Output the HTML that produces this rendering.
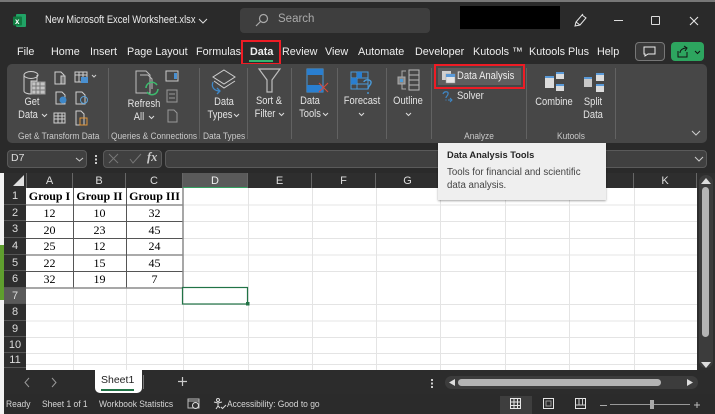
<!DOCTYPE html>
<html><head><meta charset="utf-8"><style>
html,body{margin:0;padding:0}
body{width:715px;height:414px;overflow:hidden;position:relative;background:#fff;font-family:"Liberation Sans",sans-serif}
.a{position:absolute}
.t{position:absolute;white-space:nowrap;color:#e4e4e4;font-size:11px;line-height:13px}
.c{transform:translateX(-50%) scaleX(.85);text-align:center}
.n{transform:scaleX(.86);transform-origin:left center}
.m{font-size:10.8px;color:#eee;top:46px}
.g{font-size:9px;color:#cacaca;top:130px;transform:scaleX(.93);transform-origin:left center}
.g.c{transform:translateX(-50%) scaleX(.93);transform-origin:center}
.s{font-size:9px;color:#d6d6d6;top:398px;transform:scaleX(.94);transform-origin:left center}
.sep{position:absolute;top:68px;width:1px;height:71px;background:#626262}
.h{position:absolute;top:173px;height:15px;background:#2e2e2e;color:#ddd;font-size:11px;line-height:16px;text-align:center;box-sizing:border-box;border-right:1px solid #666}
.r{position:absolute;left:4px;width:22px;background:#2e2e2e;color:#ddd;font-size:11px;text-align:center;box-sizing:border-box;border-bottom:1px solid #555}
.d{position:absolute;font-family:"Liberation Serif",serif;color:#000;font-size:12px;line-height:16.6px;text-align:center;height:16.6px}
.b{font-weight:bold}
svg{position:absolute;overflow:visible}
</style></head><body>
<div class="a" style="left:0;top:0;width:715px;height:173px;background:#2a2a2a"></div>
<div class="a" style="left:0;top:0;width:715px;height:2px;background:#777"></div>

<!-- title bar -->
<svg style="left:13px;top:14px" width="14" height="14"><rect x="3" y="0" width="10" height="13" rx="1" fill="#21a366"/><rect x="0" y="2.500" width="9" height="9" rx="1" fill="#107c41"/><text x="2" y="10" font-size="8" font-weight="bold" fill="#fff" font-family="Liberation Sans">x</text></svg>
<div class="t n" style="left:45px;top:14px;color:#ececec;transform:scaleX(.85)">New Microsoft Excel Worksheet.xlsx</div>
<svg style="left:198px;top:18px" width="10" height="6"><path d="M1 1l4 4 4-4" fill="none" stroke="#ddd" stroke-width="1"/></svg>
<div class="a" style="left:240px;top:8px;width:190px;height:25px;background:#3e3e3e;border-radius:4px"></div>
<svg style="left:255px;top:13px" width="14" height="14"><circle cx="8.500" cy="5.500" r="4" fill="none" stroke="#aaa" stroke-width="1.200"/><path d="M5.500 8.500L1 13" stroke="#aaa" stroke-width="1.200"/></svg>
<div class="t" style="left:278px;top:13px;font-size:11.500px;color:#aaa">Search</div>
<div class="a" style="left:460px;top:6px;width:100px;height:23px;background:#000"></div>
<svg style="left:573px;top:13px" width="15" height="15"><path d="M2 13l1-4 6-7 4 3-6 7zM3 9l4 3M9 2l1-1" fill="none" stroke="#e8e8e8" stroke-width="1"/></svg>
<div class="a" style="left:614px;top:20px;width:9px;height:1px;background:#ddd"></div>
<div class="a" style="left:651px;top:16px;width:7px;height:7px;border:1.200px solid #ddd;border-radius:1px"></div>
<svg style="left:689px;top:16px" width="10" height="10"><path d="M1 1l8 8M9 1l-8 8" stroke="#e4e4e4" stroke-width="1.100"/></svg>

<!-- menu -->
<div class="t m" style="left:17px">File</div>
<div class="t m" style="left:51px">Home</div>
<div class="t m" style="left:90px">Insert</div>
<div class="t m" style="left:127px">Page Layout</div>
<div class="t m" style="left:196px">Formulas</div>
<div class="t m" style="left:250px;font-weight:bold">Data</div>
<div class="a" style="left:249px;top:60px;width:24px;height:2px;background:#33b56f"></div>
<div class="a" style="left:241px;top:40px;width:40px;height:25px;border:2.500px solid #ee1c25;box-sizing:border-box"></div>
<div class="t m" style="left:282px">Review</div>
<div class="t m" style="left:325px">View</div>
<div class="t m" style="left:358px">Automate</div>
<div class="t m" style="left:415px">Developer</div>
<div class="t m" style="left:473px">Kutools ™</div>
<div class="t m" style="left:529px">Kutools Plus</div>
<div class="t m" style="left:597px">Help</div>
<div class="a" style="left:635px;top:42px;width:30px;height:19px;border:1px solid #777;border-radius:4px;box-sizing:border-box;background:#3a3a3a"></div>
<svg style="left:643px;top:46px" width="14" height="11"><path d="M1 1h11v7H5L2 10V8H1z" fill="none" stroke="#eee" stroke-width="1"/></svg>
<div class="a" style="left:671px;top:42px;width:33px;height:19px;background:#2da55f;border-radius:4px"></div>
<svg style="left:677px;top:46px" width="24" height="12"><path d="M1 5v6h9V6M3 7c0-3 3-5 6-5M7 0l3 2-2 3" fill="none" stroke="#111" stroke-width="1"/><path d="M18 5l2.500 2.500L23 5" fill="none" stroke="#111" stroke-width="1"/></svg>

<!-- ribbon -->
<div class="a" style="left:7px;top:64px;width:700px;height:79px;background:#474747;border-radius:5px"></div>
<div class="sep" style="left:108px"></div><div class="sep" style="left:199px"></div><div class="sep" style="left:247px"></div><div class="sep" style="left:291px"></div><div class="sep" style="left:337px"></div><div class="sep" style="left:386px"></div><div class="sep" style="left:431px"></div><div class="sep" style="left:526px"></div><div class="sep" style="left:615px"></div>

<svg style="left:22px;top:70px" width="24" height="26"><path d="M2 5v16c0 2 4 3 7 3V11h6V5" fill="none" stroke="#cfcfcf"/><ellipse cx="9" cy="5" rx="7" ry="3.500" fill="none" stroke="#cfcfcf"/><rect x="10" y="12" width="13" height="12" fill="#c4c4c4" stroke="#999"/><path d="M10 16h13M10 20h13M14 12v12M18 12v12" stroke="#777"/></svg>
<div class="t c" style="left:32px;top:96px">Get</div>
<div class="t c" style="left:28px;top:109px">Data</div>
<svg style="left:41px;top:113px" width="7" height="5"><path d="M1 1l2.500 2.500L6 1" fill="none" stroke="#ddd"/></svg>
<svg style="left:54px;top:71px" width="46" height="54" fill="none" stroke="#cfcfcf" stroke-width="1">
<path d="M1 1h6l3 3v9H1z"/><path d="M7 5h4v8H7z" fill="#777"/>
<rect x="21" y="1" width="12" height="10"/><path d="M21 4h12M25 1v10M29 1v10"/><rect x="27" y="6" width="7" height="6" fill="#4a90d0" stroke="none"/>
<path d="M38 4l2 2 2-2"/>
<path d="M2 21h6l3 3v9H2z"/><circle cx="9" cy="29" r="3.500" fill="#3f88c8" stroke="none"/>
<path d="M22 21h6l3 3v9h-9z"/><circle cx="30" cy="29" r="3.500" stroke="#5ba0d8"/>
<rect x="0" y="42" width="11" height="10"/><path d="M0 45h11M0 48h11M4 42v10M8 42v10"/>
<path d="M22 40h5l3 3v11h-8z"/><rect x="26" y="47" width="7" height="7" fill="none" stroke="#e0953a"/>
</svg>
<div class="t g" style="left:18px">Get &amp; Transform Data</div>
<div class="t g" style="left:111px">Queries &amp; Connections</div>
<div class="t g" style="left:203px">Data Types</div>

<svg style="left:135px;top:70px" width="24" height="26" fill="none"><path d="M1 1h10l4 4v18H1z" stroke="#bdbdbd"/><path d="M5 5h8l4 4v10" stroke="#bdbdbd"/><path d="M11 18a6 6 0 0 1 11-3M23 19a6 6 0 0 1-11 3" stroke="#3dbb6e" stroke-width="1.600"/></svg>
<div class="t c" style="left:144px;top:98px">Refresh</div>
<div class="t c" style="left:139px;top:111px">All</div>
<svg style="left:148px;top:115px" width="7" height="5"><path d="M1 1l2.500 2.500L6 1" fill="none" stroke="#ddd"/></svg>
<svg style="left:165px;top:70px" width="15" height="54" fill="none" stroke="#c8c8c8"><rect x="1" y="1" width="12" height="10"/><rect x="9" y="3" width="3" height="6" fill="#4a90d0" stroke="none"/><rect x="2" y="20" width="10" height="12" stroke="#999"/><path d="M4 24h6M4 28h6" stroke="#999"/><path d="M3 40h6l3 3v9H3z" stroke="#999"/></svg>

<svg style="left:211px;top:69px" width="27" height="28" fill="none"><path d="M13 1l11 7-11 7L2 8z" stroke="#cfcfcf"/><path d="M3 12l10 7 11-7" stroke="#cfcfcf"/><path d="M2 13c-2 5 1 9 7 9M6 19l3 3-3 3" stroke="#3f88c8" stroke-width="1.300"/></svg>
<div class="t c" style="left:224px;top:96px">Data</div>
<div class="t c" style="left:220px;top:109px">Types</div>
<svg style="left:233px;top:113px" width="7" height="5"><path d="M1 1l2.500 2.500L6 1" fill="none" stroke="#ddd"/></svg>

<svg style="left:258px;top:68px" width="24" height="25" fill="none"><path d="M1 1h21l-8 11v12H9V12z" stroke="#bdbdbd" stroke-width="1.200"/></svg>
<div class="t c" style="left:269px;top:95px">Sort &amp;</div>
<div class="t c" style="left:265px;top:108px">Filter</div>
<svg style="left:278px;top:112px" width="7" height="5"><path d="M1 1l2.500 2.500L6 1" fill="none" stroke="#ddd"/></svg>

<svg style="left:306px;top:69px" width="24" height="25" fill="none"><rect x="1" y="0" width="16" height="23" stroke="#4a9ad8"/><rect x="1" y="0" width="16" height="6" fill="#2a7fd0"/><rect x="1" y="16" width="16" height="7" fill="#2a7fd0"/><path d="M13 14l9 9M22 14l-9 9" stroke="#d84a3a" stroke-width="1.100"/></svg>
<div class="t c" style="left:310px;top:95px">Data</div>
<div class="t c" style="left:310px;top:108px">Tools</div>
<svg style="left:322px;top:112px" width="7" height="5"><path d="M1 1l2.500 2.500L6 1" fill="none" stroke="#ddd"/></svg>

<svg style="left:350px;top:71px" width="25" height="24" fill="none"><rect x="1" y="1" width="17" height="17" stroke="#4a9ad8"/><path d="M1 7h17M1 13h17M7 1v17" stroke="#4a9ad8"/><rect x="1" y="7" width="6" height="6" fill="#2a7fd0"/><rect x="7" y="1" width="5" height="6" fill="#2a7fd0"/><path d="M14 11c0-3 8-3 7 1 0 2-3 3-3 6M18 21v2" stroke="#4a9ad8" stroke-width="1.400"/></svg>
<div class="t c" style="left:362px;top:95px">Forecast</div>
<svg style="left:358px;top:112px" width="7" height="5"><path d="M1 1l2.500 2.500L6 1" fill="none" stroke="#ddd"/></svg>

<svg style="left:398px;top:69px" width="22" height="22" fill="none"><rect x="11" y="1" width="10" height="20" stroke="#b8b8b8"/><path d="M11 6h10M11 11h10M11 16h10" stroke="#b8b8b8"/><path d="M8 2H4v6M8 20H4v-6" stroke="#aaa"/><rect x="0" y="8" width="7" height="7" fill="#888" stroke="#aaa"/><rect x="2" y="10" width="3" height="3" fill="#4a9ad8"/></svg>
<div class="t c" style="left:408px;top:95px">Outline</div>
<svg style="left:405px;top:112px" width="7" height="5"><path d="M1 1l2.500 2.500L6 1" fill="none" stroke="#ddd"/></svg>

<div class="a" style="left:434px;top:64px;width:91px;height:25px;border:2.500px solid #ee1c25;box-sizing:border-box;background:#474747"></div>
<div class="a" style="left:438px;top:68px;width:83px;height:17px;background:#5e5e5e"></div>
<svg style="left:442px;top:71px" width="14" height="12"><rect x="0" y="0" width="9" height="9" fill="#d0d0d0"/><rect x="4" y="3" width="9" height="9" fill="#e4e4e4" stroke="#999" stroke-width=".5"/><rect x="4" y="3" width="9" height="3" fill="#5a9ad8"/></svg>
<div class="t n" style="left:457px;top:70px;color:#eee">Data Analysis</div>
<svg style="left:442px;top:91px" width="12" height="12" fill="none"><path d="M1 3c1-3 6-3 5 0 0 2-2 2-2 4" stroke="#3f88c8" stroke-width="1.200"/><path d="M4 8.500v1M6 9h4M8 7l2 2-2 2" stroke="#3f88c8"/></svg>
<div class="t n" style="left:457px;top:90px">Solver</div>
<div class="t g c" style="left:479px">Analyze</div>

<svg style="left:545px;top:71px" width="20" height="21"><rect x="0" y="5" width="9" height="12" fill="#dcdcdc"/><rect x="11" y="1" width="8" height="7" fill="#dcdcdc"/><rect x="11" y="13" width="8" height="7" fill="#dcdcdc"/><rect x="11" y="1" width="8" height="2" fill="#5a9ad8"/><rect x="11" y="13" width="8" height="2" fill="#5a9ad8"/><rect x="0" y="5" width="9" height="2" fill="#5a9ad8"/></svg>
<div class="t c" style="left:554px;top:96px">Combine</div>
<svg style="left:584px;top:73px" width="20" height="19"><rect x="0" y="4" width="8" height="10" fill="#c8c8c8"/><rect x="12" y="0" width="8" height="8" fill="#dcdcdc"/><rect x="12" y="11" width="8" height="8" fill="#dcdcdc"/><rect x="12" y="0" width="8" height="2" fill="#5a9ad8"/><rect x="12" y="11" width="8" height="2" fill="#5a9ad8"/><rect x="0" y="4" width="8" height="2" fill="#5a9ad8"/></svg>
<div class="t c" style="left:593px;top:96px">Split</div>
<div class="t c" style="left:593px;top:109px">Data</div>
<div class="t g c" style="left:571px">Kutools</div>
<svg style="left:691px;top:130px" width="10" height="6"><path d="M1 1l4 4 4-4" fill="none" stroke="#ccc"/></svg>

<!-- formula bar -->
<div class="a" style="left:0;top:143px;width:715px;height:30px;background:#2a2a2a"></div>
<div class="a" style="left:7px;top:150px;width:80px;height:18px;background:#404040;border:1px solid #5a5a5a;border-radius:4px;box-sizing:border-box"></div>
<div class="t" style="left:11px;top:152px;font-size:10.500px;color:#ddd">D7</div>
<svg style="left:75px;top:157px" width="9" height="5"><path d="M1 1l3.500 3L8 1" fill="none" stroke="#ccc"/></svg>
<div class="a" style="left:95px;top:155px;width:2px;height:2px;background:#ccc;box-shadow:0 3.500px 0 #ccc,0 7px 0 #ccc"></div>
<div class="a" style="left:103px;top:150px;width:59px;height:18px;background:#404040;border:1px solid #5a5a5a;border-radius:4px;box-sizing:border-box"></div>
<svg style="left:108px;top:153px" width="34" height="12" fill="none"><path d="M1 1l9 9M10 1l-9 9" stroke="#777"/><path d="M22 6l3 4 8-9" stroke="#777"/></svg>
<div class="t" style="left:147px;top:151px;font-family:'Liberation Serif',serif;font-style:italic;font-size:12.500px;font-weight:bold;color:#ccc">fx</div>
<div class="a" style="left:165px;top:150px;width:542px;height:18px;background:#404040;border:1px solid #5a5a5a;border-radius:4px;box-sizing:border-box"></div>
<svg style="left:694px;top:156px" width="10" height="6"><path d="M1 1l4 4 4-4" fill="none" stroke="#ccc"/></svg>

<!-- sheet -->
<div class="a" style="left:0;top:173px;width:4px;height:72px;background:#f3f3f3"></div>
<div class="a" style="left:0;top:245px;width:4px;height:55px;background:#5f9e2e"></div>
<div class="a" style="left:4px;top:173px;width:693px;height:15px;background:#2e2e2e"></div>
<svg style="left:13px;top:175px" width="12" height="12"><path d="M11 0v11H0z" fill="#e0e0e0"/></svg>
<div class="h" style="left:26px;width:47px;border-left:1px solid #666">A</div>
<div class="h" style="left:73px;width:53px">B</div>
<div class="h" style="left:126px;width:57px">C</div>
<div class="h" style="left:183px;width:65px;background:#5a5a5a;color:#eee;border-bottom:1px solid #33a060">D</div>
<div class="h" style="left:248px;width:64px">E</div>
<div class="h" style="left:312px;width:64px">F</div>
<div class="h" style="left:376px;width:64px">G</div>
<div class="h" style="left:440px;width:65px">H</div>
<div class="h" style="left:505px;width:64px">I</div>
<div class="h" style="left:569px;width:65px">J</div>
<div class="h" style="left:634px;width:63px">K</div>

<div class="r" style="top:188px;height:17px;line-height:17px">1</div>
<div class="r" style="top:205px;height:16px;line-height:16px">2</div>
<div class="r" style="top:221px;height:17px;line-height:17px">3</div>
<div class="r" style="top:238px;height:17px;line-height:17px">4</div>
<div class="r" style="top:255px;height:16px;line-height:16px">5</div>
<div class="r" style="top:271px;height:17px;line-height:17px">6</div>
<div class="r" style="top:288px;height:16px;line-height:16px;background:#5a5a5a">7</div>
<div class="r" style="top:304px;height:17px;line-height:17px">8</div>
<div class="r" style="top:321px;height:16px;line-height:16px">9</div>
<div class="r" style="top:337px;height:16px;line-height:16px">10</div>
<div class="r" style="top:353px;height:15px;line-height:15px">11</div>
<div class="r" style="top:368px;height:2px;border:0"></div>

<svg style="left:0;top:0" width="715" height="414" fill="none">
<g stroke="#e4e4e4" stroke-width="1">
<path d="M183 205h514M183 221.500h514M183 238.500h514M183 255h514M183 271.500h514M26 304.500h671M26 321h671M26 337.500h671M26 353.500h671M26 364.500h671"/>
<path d="M73.500 288v82M126.500 288v82M183.500 288v82M248.500 188v182M312.500 188v182M376.500 188v182M440.500 188v182M505.500 188v182M569.500 188v182M634.500 188v182"/>
</g>
<g stroke="#555" stroke-width="1">
<path d="M26 205h157M26 221.500h157M26 238.500h157M26 255h157M26 271.500h157"/>
<path d="M73.500 188v100M126.500 188v100"/>
</g>
<path d="M183 188v100M26 288h157" stroke="#8a8a8a" stroke-width="1.500"/>
<rect x="182.500" y="287.500" width="65" height="16.500" stroke="#217346" stroke-width="1.200"/>
<rect x="246" y="302" width="3.500" height="3.500" fill="#217346"/>
</svg>

<div class="d b" style="left:26px;top:188px;width:47px">Group I</div>
<div class="d b" style="left:73px;top:188px;width:53px">Group II</div>
<div class="d b" style="left:126px;top:188px;width:57px">Group III</div>
<div class="d" style="left:26px;top:205px;width:47px">12</div><div class="d" style="left:73px;top:205px;width:53px">10</div><div class="d" style="left:126px;top:205px;width:57px">32</div>
<div class="d" style="left:26px;top:222px;width:47px">20</div><div class="d" style="left:73px;top:222px;width:53px">23</div><div class="d" style="left:126px;top:222px;width:57px">45</div>
<div class="d" style="left:26px;top:238px;width:47px">25</div><div class="d" style="left:73px;top:238px;width:53px">12</div><div class="d" style="left:126px;top:238px;width:57px">24</div>
<div class="d" style="left:26px;top:255px;width:47px">22</div><div class="d" style="left:73px;top:255px;width:53px">15</div><div class="d" style="left:126px;top:255px;width:57px">45</div>
<div class="d" style="left:26px;top:271px;width:47px">32</div><div class="d" style="left:73px;top:271px;width:53px">19</div><div class="d" style="left:126px;top:271px;width:57px">7</div>

<!-- vertical scrollbar -->
<div class="a" style="left:697px;top:173px;width:18px;height:197px;background:#2e2e2e"></div>
<div class="a" style="left:699px;top:175px;width:14px;height:193px;background:#3c3c3c;border-radius:7px"></div>
<svg style="left:701px;top:178px" width="10" height="7"><path d="M5 0l5 6H0z" fill="#ddd"/></svg>
<div class="a" style="left:702px;top:187px;width:7px;height:150px;background:#b4b4b4;border-radius:4px"></div>
<svg style="left:701px;top:362px" width="10" height="7"><path d="M5 6l5-6H0z" fill="#ddd"/></svg>

<!-- tooltip -->
<div class="a" style="left:438px;top:143px;width:168px;height:57px;background:#efefef;box-shadow:0 1px 2px rgba(0,0,0,.35)"></div>
<div class="t" style="left:447px;top:149px;font-size:9.300px;font-weight:bold;color:#262626">Data Analysis Tools</div>
<div class="t" style="left:447px;top:166px;font-size:9.700px;color:#444">Tools for financial and scientific</div>
<div class="t" style="left:447px;top:179px;font-size:9.700px;color:#444">data analysis.</div>

<!-- tabs -->
<div class="a" style="left:4px;top:370px;width:711px;height:24px;background:#2c2c2c"></div>
<div class="a" style="left:0;top:300px;width:4px;height:114px;background:#f3f3f3"></div>
<svg style="left:24px;top:377px" width="34" height="11" fill="none"><path d="M5 1L1 5.500 5 10" stroke="#999"/><path d="M28 1l4 4.500-4 4.500" stroke="#999"/></svg>
<div class="a" style="left:95px;top:370px;width:47px;height:23px;background:#fff;border-radius:0 0 5px 5px"></div>
<div class="t" style="left:101px;top:374px;font-size:10.500px;color:#222">Sheet1</div>
<div class="a" style="left:101px;top:389px;width:33px;height:1.500px;background:#217346"></div>
<div class="a" style="left:143px;top:375px;width:1px;height:14px;background:#777"></div>
<svg style="left:177px;top:376px" width="11" height="11"><path d="M5.500 1v9M1 5.500h9" stroke="#ccc" stroke-width="1.200"/></svg>
<div class="a" style="left:431px;top:379px;width:2px;height:2px;background:#ccc;box-shadow:0 3.500px 0 #ccc,0 7px 0 #ccc"></div>
<div class="a" style="left:445px;top:376px;width:253px;height:13px;background:#3c3c3c;border-radius:7px"></div>
<svg style="left:449px;top:379px" width="244" height="8"><path d="M6 0v7L0 3.500z" fill="#ddd"/><path d="M238 0v7l6-3.500z" fill="#ddd"/></svg>
<div class="a" style="left:458px;top:379px;width:203px;height:7px;background:#b4b4b4;border-radius:4px"></div>

<!-- status -->
<div class="a" style="left:4px;top:394px;width:711px;height:20px;background:#2b2b2b"></div>
<div class="t s" style="left:6px">Ready</div>
<div class="t s" style="left:42px">Sheet 1 of 1</div>
<div class="t s" style="left:99px">Workbook Statistics</div>
<svg style="left:187px;top:398px" width="13" height="12" fill="none"><rect x="1" y="1" width="11" height="9" stroke="#bbb"/><path d="M1 3h11" stroke="#bbb"/><circle cx="8.500" cy="7.500" r="3" fill="#333" stroke="#ddd"/></svg>
<svg style="left:213px;top:398px" width="13" height="12" fill="none"><circle cx="5" cy="2" r="1.500" stroke="#ddd"/><path d="M1 4l4 1 4-1M5 5v3l-2 3M5 8l2 2M8 9l1.500 1.500L13 7" stroke="#ddd"/></svg>
<div class="t s" style="left:227px">Accessibility: Good to go</div>
<div class="a" style="left:500px;top:396px;width:32px;height:18px;background:#3e3e3e"></div>
<svg style="left:510px;top:398px" width="112" height="13" fill="none" stroke="#e6e6e6">
<rect x=".5" y=".5" width="10" height="10"/><path d="M.5 4h10M.5 7.500h10M4 .5v10M7.500 .5v10"/>
<rect x="33.500" y=".5" width="10" height="10"/><rect x="36" y="3" width="5" height="5" stroke="#999"/>
<rect x="65.500" y=".5" width="10" height="10"/><path d="M65.500 7h10M69 .5V7M72.500 .5V7" stroke="#ccc"/>
</svg>
<div class="a" style="left:600px;top:405px;width:7px;height:1px;background:#aaa"></div>
<div class="a" style="left:610px;top:404px;width:80px;height:1px;background:#999"></div>
<div class="a" style="left:650px;top:400px;width:4px;height:9px;background:#aaa"></div>
<svg style="left:693px;top:401px" width="8" height="8"><path d="M4 1v6M1 4h6" stroke="#bbb"/></svg>
</body></html>
